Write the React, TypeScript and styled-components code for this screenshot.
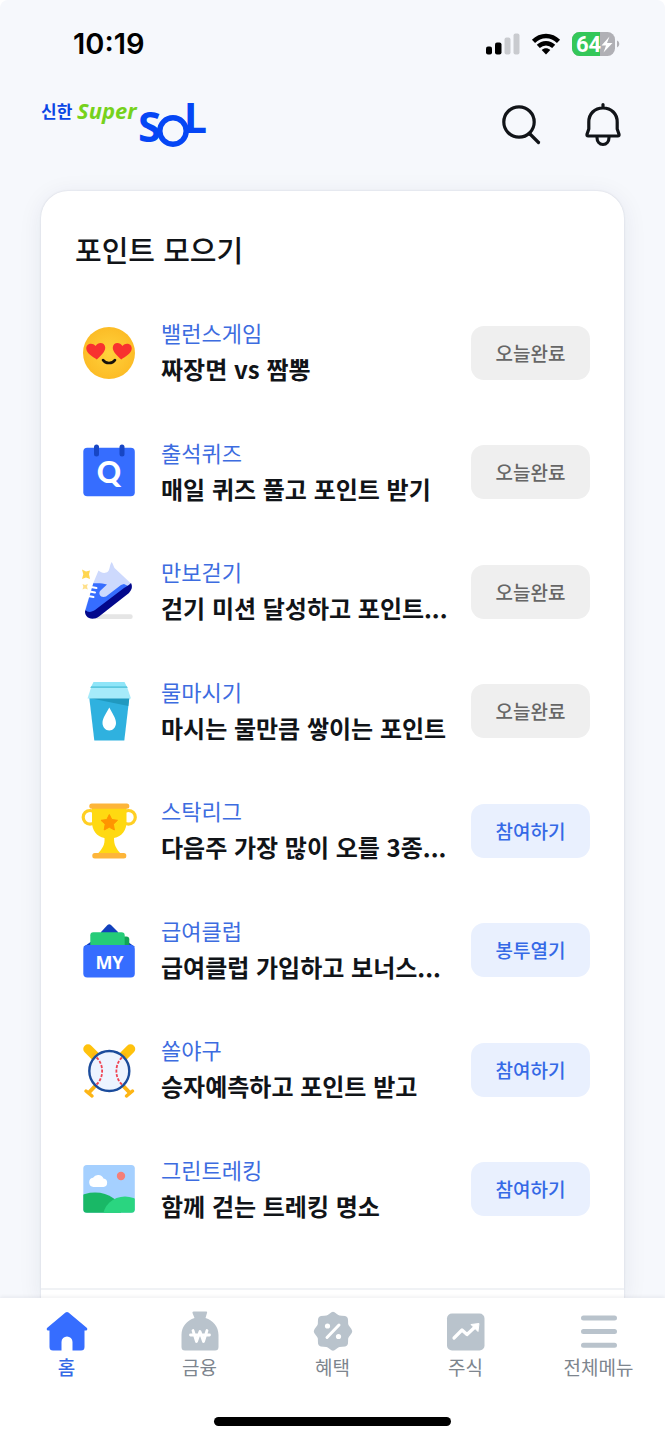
import React from "react";
import styled, { createGlobalStyle } from "styled-components";

const korean = `"Noto Sans CJK KR", "Noto Sans", sans-serif`;
const latin = `Inter, "Noto Sans CJK KR", sans-serif`;

const GlobalStyle = createGlobalStyle`
  *, *::before, *::after { box-sizing: border-box; }
  body { margin: 0; background: #fff; font-family: ${korean}; color: #111418; }
  h1, p, ul { margin: 0; padding: 0; }
  button { font: inherit; border: 0; padding: 0; background: none; cursor: pointer; }
  a { color: inherit; text-decoration: none; }
  svg { display: block; overflow: visible; }
`;

const Screen = styled.div`
  display: flex;
  flex-direction: column;
  min-height: 100vh;
  border-radius: 8px 8px 0 0;
  background: #f6f8fc;
`;

const StatusBar = styled.div`
  display: flex;
  align-items: center;
  justify-content: space-between;
  height: 88px;
  padding: 0 46px 0 73px;
`;

const Clock = styled.time`
  font: 600 29px/32px ${latin};
  color: #000;
`;

const StatusIcons = styled.div`
  display: flex;
  align-items: center;
  gap: 12px;
`;

const Header = styled.header`
  display: flex;
  align-items: center;
  justify-content: space-between;
  height: 74px;
  padding: 0 41px;
`;

const HeaderActions = styled.div`
  display: flex;
  gap: 40px;
`;

const IconButton = styled.button`
  display: block;
  color: #111418;
`;

const Main = styled.main`
  flex: 1;
  display: flex;
  flex-direction: column;
  padding: 29px 41px 0;
  overflow: hidden;
`;

const Card = styled.section`
  flex: 1;
  display: flex;
  flex-direction: column;
  border-radius: 27px 27px 0 0;
  background: #fff;
  box-shadow: 0 0 2px rgba(30, 40, 80, 0.16), 0 4px 24px rgba(30, 40, 80, 0.08);
`;

const CardTitle = styled.h1`
  padding: 38px 34px 24px;
  font-size: 29px;
  line-height: 40px;
  font-weight: 500;
`;

const MissionList = styled.ul`
  flex: 1;
  display: flex;
  flex-direction: column;
  padding: 0 34px;
  list-style: none;
`;

const Mission = styled.li`
  flex: 1;
  display: flex;
  align-items: center;
  gap: 18px;
`;

const MissionIcon = styled.div`
  flex: none;
  display: flex;
  justify-content: center;
  width: 68px;
`;

const MissionText = styled.div`
  flex: 1;
  display: grid;
  gap: 1px;
  min-width: 0;
  padding-bottom: 4px;
  white-space: nowrap;
`;

const MissionLabel = styled.p`
  font-size: 22px;
  line-height: 36px;
  color: #3d6ce0;
`;

const MissionTitle = styled.p`
  font-size: 24px;
  line-height: 36px;
  font-weight: 700;
`;

const MissionButton = styled.button<{ $done: boolean }>`
  flex: none;
  width: 119px;
  height: 54px;
  border-radius: 13px;
  font-size: 19px;
  line-height: 28px;
  font-weight: 500;
  background: ${(p) => (p.$done ? "#efefef" : "#e9f0fe")};
  color: ${(p) => (p.$done ? "#666" : "#3569e6")};
`;

const CardFooter = styled.div`
  height: 10px;
  margin-top: 39px;
  border-top: 2px solid #f0f2f5;
`;

const BottomBar = styled.footer`
  position: sticky;
  bottom: 0;
  display: flex;
  flex-direction: column;
  align-items: center;
  justify-content: space-between;
  height: 142px;
  padding: 13px 0 14px;
  background: #fff;
  box-shadow: 0 -1px 4px rgba(20, 30, 50, 0.08);
`;

const Tabs = styled.nav`
  display: grid;
  grid-template-columns: repeat(5, 1fr);
  width: 100%;
`;

const Tab = styled.a<{ $active?: boolean }>`
  display: flex;
  flex-direction: column;
  align-items: center;
  gap: 2px;
  font-size: 19px;
  line-height: 28px;
  font-weight: ${(p) => (p.$active ? 500 : 400)};
  color: ${(p) => (p.$active ? "#3569e6" : "#7d858e")};
`;

const HomeIndicator = styled.div`
  width: 237px;
  height: 9px;
  border-radius: 5px;
  background: #000;
`;

const Signal = () => (
  <svg width="34" height="22" viewBox="0 0 34 22" aria-hidden="true">
    <rect x="0" y="13.5" width="6" height="8" rx="2" />
    <rect x="9" y="9.5" width="6.5" height="12" rx="2" />
    <rect x="18.5" y="4.5" width="6" height="17" rx="2" fill="#c9cbcf" />
    <rect x="27.5" y="0.5" width="6" height="21" rx="2" fill="#c9cbcf" />
  </svg>
);

const Wifi = () => (
  <svg width="28" height="22" viewBox="0 0 28 22" fill="none" stroke="#000" strokeWidth="4.4" aria-hidden="true">
    <path d="M1.5 8.4C8.5 1.2 19.5 1.2 26.5 8.4" />
    <path d="M6.3 13.4C10.7 9.1 17.3 9.1 21.7 13.4" />
    <path d="M14 21.5L9.7 17C12.2 14.8 15.8 14.8 18.3 17Z" fill="#000" stroke="none" />
  </svg>
);

const Battery = () => (
  <svg width="47" height="24" viewBox="0 0 47 24" aria-hidden="true">
    <rect width="43" height="24" rx="7.5" fill="#b0b0b5" />
    <path d="M7.5 0H28V24H7.5A7.5 7.5 0 0 1 0 16.5V7.5A7.5 7.5 0 0 1 7.5 0Z" fill="#34c759" />
    <path d="M45 8.5A3.8 3.8 0 0 1 45 15.5Z" fill="#b0b0b5" />
    <text x="4" y="19.5" fill="#fff" fontFamily="Roboto, sans-serif" fontSize="22" fontWeight="700">64</text>
    <path d="M37.5 4.5L29.5 13.5H34L31.5 20.5L40.5 11H35Z" fill="#fff" />
  </svg>
);

const Logo = () => (
  <svg width="166" height="48" viewBox="0 0 166 48" role="img" aria-label="신한 Super SOL">
    <text x="0" y="17" fill="#0b46e5" fontFamily={korean} fontSize="17" fontWeight="700">신한</text>
    <text x="36" y="18" fill="#76d21c" fontFamily='"Noto Sans", sans-serif' fontSize="22" fontWeight="700" fontStyle="italic">Super</text>
    <g fill="#0546f5" fontWeight="700">
      <text x="97" y="41" fontFamily='"Noto Sans", sans-serif' fontSize="42">S</text>
      <circle cx="132" cy="30" r="13.2" fill="none" stroke="#0546f5" strokeWidth="5.4" />
      <text x="143" y="32" fontFamily='"Noto Sans", sans-serif' fontSize="41">L</text>
    </g>
  </svg>
);

const SearchIcon = () => (
  <svg width="42" height="44" viewBox="0 0 42 44" fill="none" stroke="currentColor" strokeWidth="3.2" strokeLinecap="round" aria-hidden="true">
    <circle cx="19" cy="19" r="15.2" />
    <path d="M30 31L38.5 39.5" />
  </svg>
);

const BellIcon = () => (
  <svg width="42" height="44" viewBox="0 0 42 44" fill="none" stroke="currentColor" strokeWidth="3.2" strokeLinecap="round" strokeLinejoin="round" aria-hidden="true">
    <path d="M21 1.5V5M21 5C12.5 5 6.8 11 6.8 19V26L5 31.2C4.7 32.4 5.2 33 6.2 33H35.8C36.8 33 37.3 32.4 37 31.2L35.2 26V19C35.2 11 29.5 5 21 5Z" />
    <path d="M15 34.5C15 38.5 17.5 41.5 21 41.5S27 38.5 27 34.5" />
  </svg>
);

const Art = ({ children }: { children: React.ReactNode }) => (
  <svg width="60" height="60" viewBox="0 0 60 60" aria-hidden="true">{children}</svg>
);

const heart = "M0 8.5C-4 5.5-9.5 1.5-9.5-3C-9.5-8-3-9.3 0-5C3-9.3 9.5-8 9.5-3C9.5 1.5 4 5.5 0 8.5Z";

const FaceArt = () => (
  <Art>
    <defs>
      <radialGradient id="face">
        <stop offset="0" stopColor="#ffd23c" />
        <stop offset="1" stopColor="#fcbc26" />
      </radialGradient>
    </defs>
    <circle cx="30" cy="30" r="26" fill="url(#face)" />
    <path d={heart} transform="translate(17 28) rotate(-5)" fill="#f8312f" />
    <path d={heart} transform="translate(43 28) rotate(5)" fill="#f8312f" />
    <path d="M24 37C26.5 41 33.5 41 36 37" fill="none" stroke="#16120c" strokeWidth="2.6" strokeLinecap="round" />
  </Art>
);

const CalendarArt = () => (
  <Art>
    <rect x="4.3" y="5.8" width="51.5" height="48.5" rx="4" fill="#366dff" />
    <rect x="15" y="2.5" width="5" height="12" rx="2.5" fill="#1746c4" />
    <rect x="40.5" y="2.5" width="5" height="12" rx="2.5" fill="#1746c4" />
    <text x="30" y="41" textAnchor="middle" fill="#fff" fontFamily="Lato, sans-serif" fontSize="30" fontWeight="900">Q</text>
  </Art>
);

const ShoeArt = () => (
  <Art>
    <rect x="14" y="52.3" width="39.7" height="4.7" rx="2.3" fill="#e5e5e5" />
    <path d="M14.3 21L19.5 8.5C22.5 11 26 12 29 9.5C31 7.5 30.5 3 32.7 0C34 2 34.5 4 35.5 6L52 21.5L43 34L14 50L6 48Z" fill="#cdd9fd" />
    <path d="M14.3 21.3C18 21 24 21 28 22.5L21.5 28.5C18.5 32 22 36.5 27 34.5L42 23L45 22L49 24L12 54L6.5 48Z" fill="#366dff" />
    <path d="M52 21C54 25 52.5 28 50 31L20 54.5C16 57.5 10 57.5 7.5 54C6 52 5.5 49.5 6.5 48C9 51 13 50 16 48L45 26C48 24 50.5 23 52 21Z" fill="#03088c" />
    <path d="M12 25L17.5 26M10.5 29.5L16 30.5M9 34L14.5 35" stroke="#fff" strokeWidth="2" strokeLinecap="round" />
    <path d="M3 7.5L7 9.5L11 8.5L10 12.3L11 17L7 15.5L3 17L4.3 12.3Z" fill="#ffd64f" />
    <path d="M3.5 22L6 23L8.8 22L8 24.7L8.8 27.5L6 26.5L3.5 27.5L4.3 24.7Z" fill="#ffe08b" />
  </Art>
);

const CupArt = () => (
  <Art>
    <path d="M14.5 1H45.5L48.5 7H11.5Z" fill="#8fe5f8" />
    <path d="M12 5.5H48L48.5 7H11.5Z" fill="#45bdd5" />
    <path d="M10.3 17H50.3L45.3 59.5H15.3Z" fill="#2fb1df" />
    <path d="M10.3 17H50.3L49.3 25Z" fill="#2099bf" />
    <path d="M12 6.7H48.3L52 17.5H8.5Z" fill="#a6ebfa" />
    <path d="M30.3 26.5C33 32 37 37 37 42C37 46 34 49.5 30.3 49.5S23.5 46 23.5 42C23.5 37 27.5 32 30.3 26.5Z" fill="#fff" />
  </Art>
);

const TrophyArt = () => (
  <Art>
    <circle cx="11" cy="16.3" r="6.8" fill="none" stroke="#ffcf24" strokeWidth="3.2" />
    <circle cx="49.5" cy="16.3" r="6.8" fill="none" stroke="#ffcf24" strokeWidth="3.2" />
    <path d="M13 6H47.5V21C47.5 29 43 35.5 35 37C35 44 37 47.5 42 53H18.5C23.5 47.5 26 44 25.5 37C17.5 35.5 13 29 13 21Z" fill="#ffd911" />
    <rect x="10.3" y="2.5" width="40" height="5.2" rx="2.5" fill="#fdb53a" />
    <rect x="13.3" y="52" width="34" height="5.5" rx="2.5" fill="#fdb53a" />
    <path d="M30.3 13.5L32.8 18.5L38.5 19.3L34.4 23.2L35.4 29L30.3 26.2L25.2 29L26.2 23.2L22 19.3L27.8 18.5Z" fill="#ff9500" stroke="#ff9500" strokeLinejoin="round" />
  </Art>
);

const WalletArt = () => (
  <Art>
    <path d="M28.5 5Q30.3 3.5 32 5L39 12V26H22V12Z" fill="#1240bd" />
    <path d="M4.5 27L11.5 22H49L56 27Z" fill="#1240bd" />
    <rect x="30" y="16.5" width="20.3" height="12" rx="3" fill="#12a457" />
    <path d="M14.3 12.3H42.5Q45.7 12.3 45.7 15.3V27H11.3V15.3Q11.3 12.3 14.3 12.3Z" fill="#25cc78" />
    <rect x="4.3" y="25" width="51.5" height="32.5" rx="4" fill="#366dff" />
    <text x="30.5" y="49" textAnchor="middle" fill="#fff" fontFamily='"Noto Sans", sans-serif' fontSize="18" fontWeight="700">MY</text>
  </Art>
);

const BaseballArt = () => (
  <Art>
    <g fill="none" strokeLinecap="round">
      <path d="M9 9L17 17M51.5 9L43.5 17" stroke="#ffc20d" strokeWidth="9.5" />
      <path d="M15 15L50.5 52.5M45.5 15L10 52.5" stroke="#fdb515" strokeWidth="4" />
      <path d="M47.5 56L53.5 51M13 56L7 51" stroke="#fdb515" strokeWidth="3.5" />
    </g>
    <circle cx="30.3" cy="31" r="20" fill="#edf4ff" stroke="#1b4c9c" strokeWidth="2.4" />
    <g fill="none" stroke="#ef4453" strokeWidth="1.8" strokeDasharray="3 1.5">
      <path d="M17.5 17.5C25 24 25 38 17.5 44.5" />
      <path d="M43 17.5C35.5 24 35.5 38 43 44.5" />
    </g>
  </Art>
);

const LandscapeArt = () => (
  <Art>
    <defs>
      <clipPath id="landscape">
        <rect x="4.3" y="6" width="51.5" height="47.7" rx="3.5" />
      </clipPath>
    </defs>
    <g clipPath="url(#landscape)">
      <rect x="4" y="6" width="53" height="48" fill="#a5d0ff" />
      <circle cx="42" cy="17" r="4.2" fill="#f57f78" />
      <path d="M14.5 28A4.7 4.7 0 0 1 14 18.7A6 6 0 0 1 24.5 19.5A4.3 4.3 0 0 1 24.5 28Z" fill="#fff" />
      <ellipse cx="16" cy="53" rx="26" ry="19.5" fill="#19b866" />
      <ellipse cx="46" cy="58" rx="22" ry="20.5" fill="#2ad580" />
    </g>
  </Art>
);

const HomeIcon = () => (
  <svg width="42" height="40" viewBox="0 0 42 40" aria-hidden="true">
    <path d="M19.5 1.5Q21 0.3 22.5 1.5L41 17Q42 18.3 40.5 19.5H38.5V36Q38.5 39.5 35 39.5H26.5V31A5.5 5.5 0 0 0 15.5 31V39.5H7Q3.5 39.5 3.5 36V19.5H1.5Q0 18.3 1 17Z" fill="#366dff" />
  </svg>
);

const MoneyIcon = () => (
  <svg width="40" height="40" viewBox="0 0 40 40" aria-hidden="true">
    <path d="M13.5 0.5H26.5Q27.5 0.5 27 2L25.5 7C33 9.5 38.5 15.5 38.5 24V36Q38.5 39.5 35 39.5H5Q1.5 39.5 1.5 36V24C1.5 15.5 7 9.5 14.5 7L12.5 2Q12 0.5 13.5 0.5Z" fill="#b9c3cc" />
    <path d="M10.5 24H29.5M13 19.5L16.5 30.5L20 20.5L23.5 30.5L27 19.5" fill="none" stroke="#fff" strokeWidth="2.8" strokeLinecap="round" strokeLinejoin="round" />
  </svg>
);

const BenefitIcon = () => (
  <svg width="42" height="40" viewBox="0 0 42 40" aria-hidden="true">
    <path d="M21 1.5C23 1.5 25 5 27.500 5.300C30 5.600 33 5 34.500 6.500C36 8 35 11 35.500 13.500C36 16 39.500 18 39.500 20.300C39.500 22.500 36 24.500 35.500 27C35 29.500 36 32.500 34.500 34C33 35.500 30 34.700 27.500 35.200C25 35.600 23 39 21 39S17 35.600 14.500 35.200C12 34.700 9 35.500 7.500 34C6 32.500 7 29.500 6.500 27C6 24.500 2.500 22.500 2.500 20.300C2.500 18 6 16 6.500 13.500C7 11 6 8 7.500 6.500C9 5 12 5.600 14.500 5.300C17 5 19 1.500 21 1.500Z" fill="#b9c3cc" stroke="#b9c3cc" strokeWidth="1.5" />
    <path d="M15 26.5L27 14" stroke="#fff" strokeWidth="3" strokeLinecap="round" />
    <circle cx="15.5" cy="15" r="2.6" fill="#fff" />
    <circle cx="26.5" cy="25.5" r="2.6" fill="#fff" />
  </svg>
);

const StockIcon = () => (
  <svg width="40" height="40" viewBox="0 0 40 40" aria-hidden="true">
    <rect x="1" y="2.5" width="37.5" height="37" rx="5" fill="#b9c3cc" />
    <path d="M8 27L16 19L21 23.5L28.5 16.5" fill="none" stroke="#fff" strokeWidth="3.2" strokeLinecap="round" strokeLinejoin="round" />
    <path d="M25 13.5L33 12.5L32 20.5Z" fill="#fff" stroke="#fff" strokeLinejoin="round" />
  </svg>
);

const MenuIcon = () => (
  <svg width="36" height="40" viewBox="0 0 36 40" stroke="#b9c3cc" strokeWidth="5" strokeLinecap="round" aria-hidden="true">
    <path d="M2.5 7H33.5M2.5 20.5H33.5M2.5 34.3H33.5" />
  </svg>
);

const missions = [
  { label: "밸런스게임", title: "짜장면 vs 짬뽕", action: "오늘완료", done: true, Icon: FaceArt },
  { label: "출석퀴즈", title: "매일 퀴즈 풀고 포인트 받기", action: "오늘완료", done: true, Icon: CalendarArt },
  { label: "만보걷기", title: "걷기 미션 달성하고 포인트...", action: "오늘완료", done: true, Icon: ShoeArt },
  { label: "물마시기", title: "마시는 물만큼 쌓이는 포인트", action: "오늘완료", done: true, Icon: CupArt },
  { label: "스탁리그", title: "다음주 가장 많이 오를 3종...", action: "참여하기", done: false, Icon: TrophyArt },
  { label: "급여클럽", title: "급여클럽 가입하고 보너스...", action: "봉투열기", done: false, Icon: WalletArt },
  { label: "쏠야구", title: "승자예측하고 포인트 받고", action: "참여하기", done: false, Icon: BaseballArt },
  { label: "그린트레킹", title: "함께 걷는 트레킹 명소", action: "참여하기", done: false, Icon: LandscapeArt },
];

const tabs = [
  { label: "홈", Icon: HomeIcon, active: true },
  { label: "금융", Icon: MoneyIcon },
  { label: "혜택", Icon: BenefitIcon },
  { label: "주식", Icon: StockIcon },
  { label: "전체메뉴", Icon: MenuIcon },
];

export default function App() {
  return (
    <>
      <GlobalStyle />
      <Screen lang="ko">
        <StatusBar>
          <Clock>10:19</Clock>
          <StatusIcons>
            <Signal />
            <Wifi />
            <Battery />
          </StatusIcons>
        </StatusBar>
        <Header>
          <Logo />
          <HeaderActions>
            <IconButton type="button" aria-label="검색"><SearchIcon /></IconButton>
            <IconButton type="button" aria-label="알림"><BellIcon /></IconButton>
          </HeaderActions>
        </Header>
        <Main>
          <Card>
            <CardTitle>포인트 모으기</CardTitle>
            <MissionList>
              {missions.map(({ label, title, action, done, Icon }) => (
                <Mission key={label}>
                  <MissionIcon><Icon /></MissionIcon>
                  <MissionText>
                    <MissionLabel>{label}</MissionLabel>
                    <MissionTitle>{title}</MissionTitle>
                  </MissionText>
                  <MissionButton type="button" $done={done}>{action}</MissionButton>
                </Mission>
              ))}
            </MissionList>
            <CardFooter />
          </Card>
        </Main>
        <BottomBar>
          <Tabs>
            {tabs.map(({ label, Icon, active }) => (
              <Tab key={label} href="#" $active={active} aria-current={active ? "page" : undefined}>
                <Icon />
                {label}
              </Tab>
            ))}
          </Tabs>
          <HomeIndicator />
        </BottomBar>
      </Screen>
    </>
  );
}
